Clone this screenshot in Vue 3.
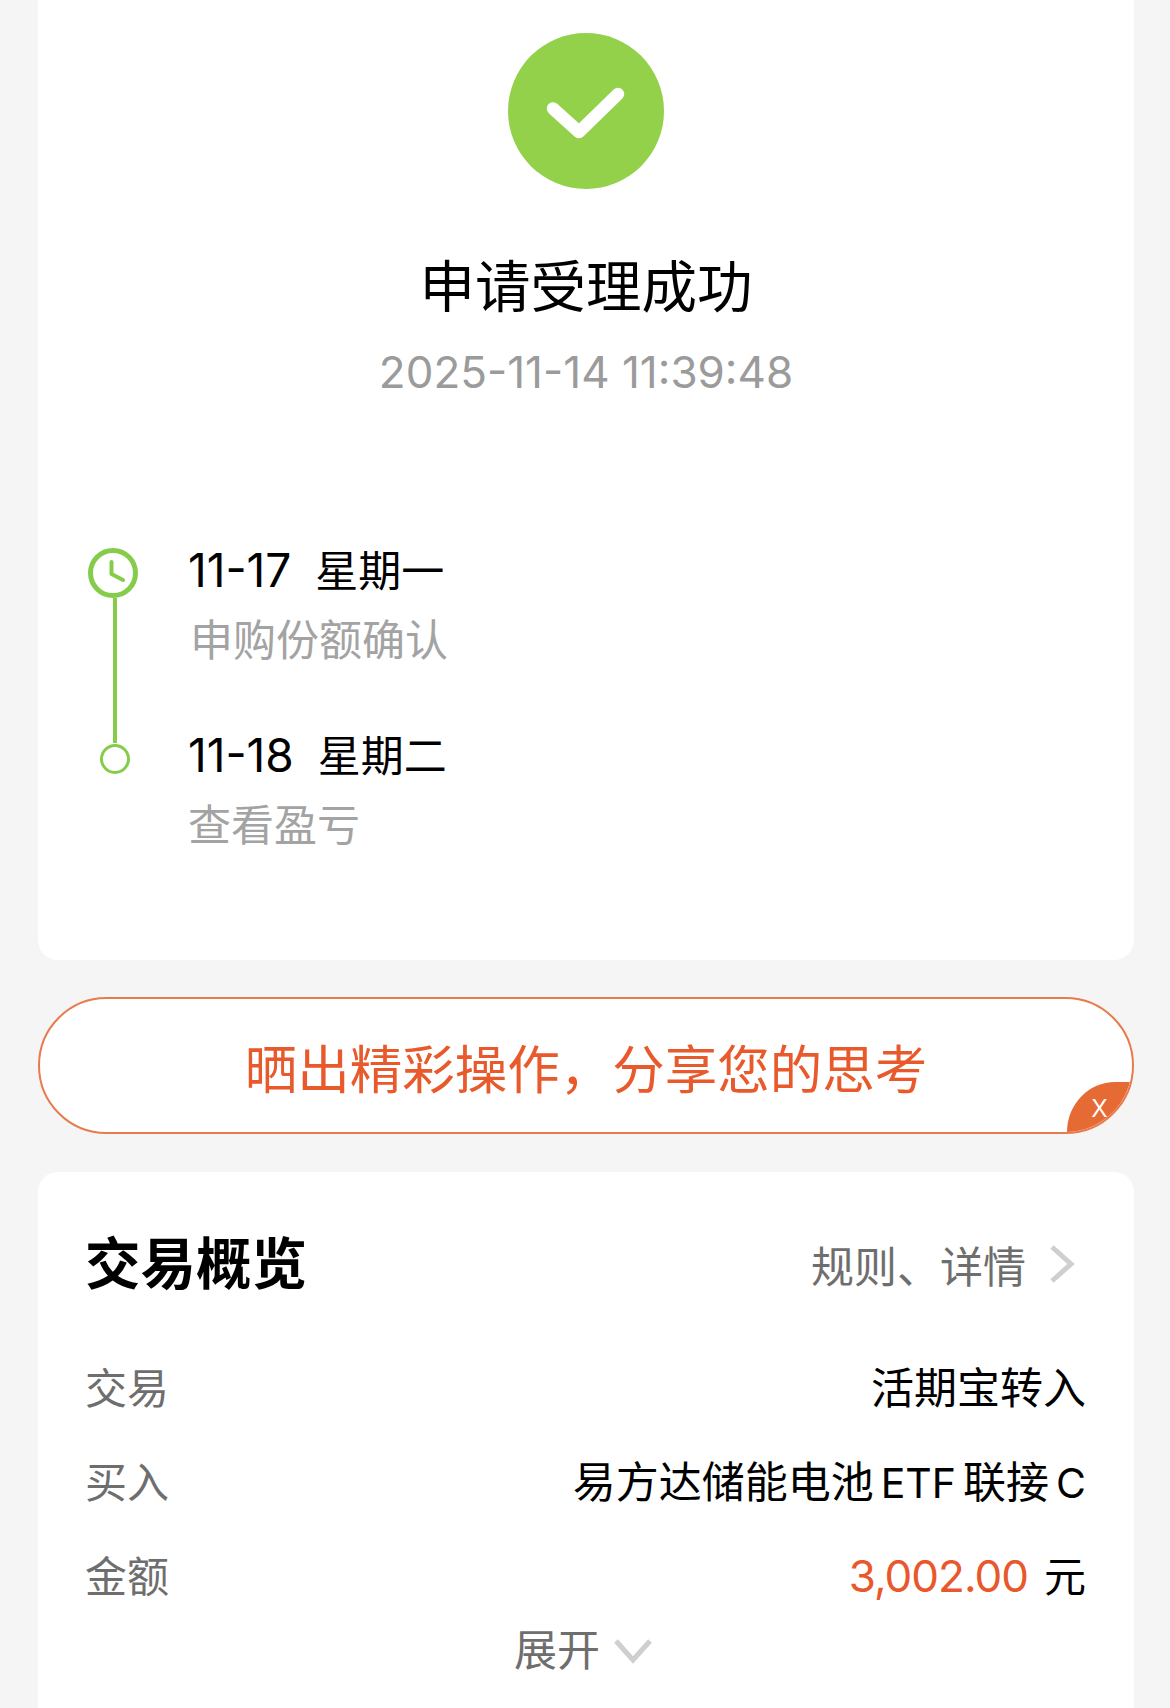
<script setup>
const steps = [
  { date: '11-17', day: '星期一', note: '申购份额确认', current: true },
  { date: '11-18', day: '星期二', note: '查看盈亏', current: false }
]
</script>

<template>
  <div class="page">
    <section class="card result">
      <svg class="ok-icon" viewBox="0 0 156 156">
        <circle cx="78" cy="78" r="78" fill="#93d14b" />
        <path d="M45 75.5 L71 99 L110 61" fill="none" stroke="#fff" stroke-width="12.5" stroke-linecap="round" stroke-linejoin="round" />
      </svg>
      <h1 class="result-title">申请受理成功</h1>
      <div class="result-time">2025-11-14 11:39:48</div>

      <div class="timeline">
        <div v-for="step in steps" :key="step.date" class="step" :class="{ 'step-last': !step.current }">
          <div class="rail">
            <svg v-if="step.current" class="clock" viewBox="0 0 50 50">
              <circle cx="25" cy="25" r="22.5" fill="none" stroke="#84cc4a" stroke-width="5" />
              <path d="M23.5 14 V26 L35 32" fill="none" stroke="#84cc4a" stroke-width="4" stroke-linecap="round" stroke-linejoin="round" />
            </svg>
            <div v-if="step.current" class="rail-line"></div>
            <div v-else class="rail-dot"></div>
          </div>
          <div class="step-text">
            <div class="step-date"><span>{{ step.date }}</span><span class="step-day">{{ step.day }}</span></div>
            <div class="step-note" :class="{ 'note-indent': step.current }">{{ step.note }}</div>
          </div>
        </div>
      </div>
    </section>

    <div class="share">
      <span>晒出精彩操作，分享您的思考</span>
      <div class="share-close">x</div>
    </div>

    <section class="card overview">
      <div class="overview-head">
        <h2 class="overview-title">交易概览</h2>
        <div class="overview-link">
          <span>规则、详情</span>
          <svg class="chev-right" viewBox="0 0 26 40">
            <path d="M3 3 L22 20 L3 37" fill="none" stroke="#cfcfcf" stroke-width="5" />
          </svg>
        </div>
      </div>
      <div class="row">
        <span class="row-label">交易</span>
        <span class="row-value">活期宝转入</span>
      </div>
      <div class="row">
        <span class="row-label">买入</span>
        <span class="row-value fund">
          <span>易方达储能电池</span>
          <span class="latin">ETF</span>
          <span>联接</span>
          <span class="latin">C</span>
        </span>
      </div>
      <div class="row">
        <span class="row-label">金额</span>
        <span class="row-value"><span class="amount">3,002.00</span><span class="unit">元</span></span>
      </div>
      <div class="expand">
        <span class="expand-text">展开</span>
        <svg class="chev-down" viewBox="0 0 40 26">
          <path d="M3 3 L20 22 L37 3" fill="none" stroke="#cfcfcf" stroke-width="5" />
        </svg>
      </div>
    </section>
  </div>
</template>

<style>
html, body {
  margin: 0;
  background: #f5f5f5;
}
</style>

<style scoped>
.page {
  width: 1170px;
  height: 1708px;
  overflow: hidden;
  box-sizing: border-box;
  padding: 0 36px 0 38px;
  background: #f5f5f5;
  font-family: Inter, "Noto Sans CJK SC", sans-serif;
}

.card {
  background: #fff;
  border-radius: 20px;
}

.result {
  height: 960px;
  border-radius: 0 0 20px 20px;
  box-sizing: border-box;
  padding-top: 33px;
  display: flex;
  flex-direction: column;
  align-items: center;
}

.ok-icon {
  width: 156px;
  height: 156px;
  flex: none;
}

.result-title {
  margin: 63px 0 0;
  font-size: 55.5px;
  line-height: 70px;
  font-weight: 400;
  color: #000;
}

.result-time {
  margin-top: 23px;
  font-size: 44px;
  line-height: 54px;
  color: #9b9b9b;
}

.timeline {
  align-self: stretch;
  margin-top: 149px;
  padding-left: 50px;
}

.step {
  display: flex;
  height: 185px;
}

.step-last {
  height: 130px;
}

.rail {
  width: 50px;
  flex: none;
  display: flex;
  flex-direction: column;
  align-items: center;
  margin-right: 50px;
}

.clock {
  width: 50px;
  height: 50px;
  flex: none;
}

.rail-line {
  width: 4px;
  flex: 1;
  margin-left: 4px;
  margin-bottom: -10px;
  background: #84cc4a;
}

.rail-dot {
  width: 30px;
  height: 30px;
  box-sizing: border-box;
  border: 3px solid #84cc4a;
  border-radius: 50%;
  margin-top: 11px;
  margin-left: 4px;
  background: #fff;
  position: relative;
}

.step-text {
  margin-top: -6px;
}

.step-date {
  font-size: 46px;
  line-height: 56px;
  color: #000;
  white-space: nowrap;
}

.step-day {
  margin-left: 24px;
  font-size: 43px;
}

.step-note {
  margin-top: 13px;
  font-size: 43px;
  line-height: 56px;
  color: #a3a3a3;
}

.note-indent {
  padding-left: 2px;
}

.share {
  position: relative;
  margin-top: 37px;
  height: 137px;
  box-sizing: border-box;
  border: 2px solid #e87a4c;
  border-radius: 69px;
  background: #fff;
  overflow: hidden;
  display: flex;
  align-items: center;
  justify-content: center;
  font-size: 52.5px;
  color: #e8592c;
}

.share-close {
  position: absolute;
  right: 0;
  bottom: 0;
  width: 65px;
  height: 50px;
  background: #e66a34;
  border-top-left-radius: 48px 50px;
  color: #fff;
  font-size: 32px;
  font-weight: 300;
  line-height: 48px;
  text-align: center;
}

.overview {
  margin-top: 38px;
  height: 600px;
  padding: 0 48px 0 47px;
}

.overview-head {
  display: flex;
  align-items: center;
  justify-content: space-between;
  padding-top: 57px;
  height: 70px;
  margin-bottom: 39px;
}

.overview-title {
  margin: 0;
  font-size: 55.5px;
  line-height: 70px;
  font-weight: 700;
  color: #000;
}

.overview-link {
  display: flex;
  align-items: center;
  font-size: 43px;
  color: #6e6e6e;
}

.chev-right {
  width: 26px;
  height: 40px;
  margin-left: 23px;
  margin-right: 11px;
}

.row {
  display: flex;
  justify-content: space-between;
  align-items: center;
  height: 94px;
  font-size: 43px;
  color: #000;
}

.row-label {
  font-size: 42px;
  color: #6e6e6e;
}

.fund {
  display: flex;
  align-items: baseline;
  gap: 7px;
}

.latin {
  font-size: 41px;
}

.amount {
  font-size: 44px;
  letter-spacing: -1px;
  color: #e8582c;
}

.unit {
  margin-left: 16px;
  font-size: 42px;
}

.expand {
  display: flex;
  align-items: center;
  justify-content: center;
  margin-top: -4px;
  padding-right: 4px;
  font-size: 43px;
  color: #6e6e6e;
}

.expand-text {
  margin-bottom: 8px;
}

.chev-down {
  width: 40px;
  height: 26px;
  margin-left: 13px;
}
</style>
